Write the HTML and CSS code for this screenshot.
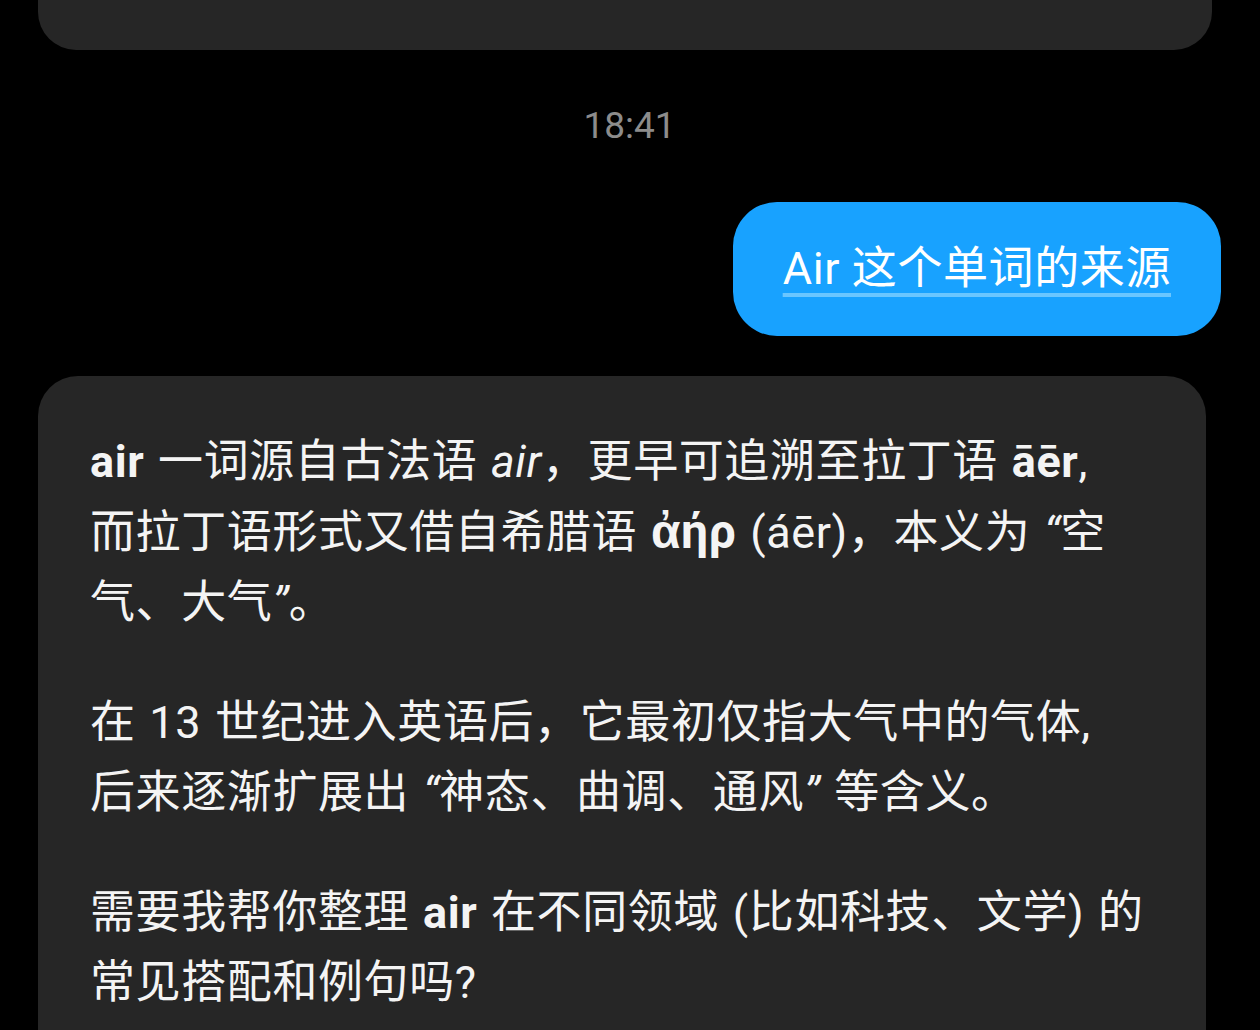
FILE: index.html
```html
<!DOCTYPE html>
<html lang="zh-CN">
<head>
    <meta charset="UTF-8">
    <meta name="viewport" content="width=device-width, initial-scale=1.0">
    <title>Chat</title>
    <link rel="stylesheet" href="styles.css">
</head>
<body>
    <div class="chat">
        <div class="bubble bubble-prev"></div>

        <div class="time">18:41</div>

        <div class="bubble bubble-me">
            <span class="link">Air 这个单词的来源</span>
        </div>

        <div class="bubble bubble-bot">
            <p><b>air</b> 一词源自古法语 <i>air</i>，更早可追溯至拉丁语 <b>āēr</b>,<br>而拉丁语形式又借自希腊语 <b class="greek">ἀήρ</b> (áēr)，本义为 <span class="q">“</span>空<br>气、大气<span class="q">”</span>。</p>
            <p>在 13 世纪进入英语后，它最初仅指大气中的气体,<br>后来逐渐扩展出 <span class="q">“</span>神态、曲调、通风<span class="q">”</span> 等含义。</p>
            <p>需要我帮你整理 <b>air</b> 在不同领域 (比如科技、文学) 的<br>常见搭配和例句吗?</p>
        </div>
    </div>
</body>
</html>
```

FILE: styles.css
```css
body {
    margin: 0;
    padding: 0;
    background: #000;
    color: #f4f4f4;
    font-family: "Roboto", "Noto Sans CJK SC", sans-serif;
    overflow: hidden;
}
.chat {
    display: flex;
    flex-direction: column;
    padding: 0 39px 0 38px;
}
.bubble {
    background: #262626;
    border-radius: 40px;
}
.bubble-prev {
    height: 50px;
    margin-right: 9px;
    border-radius: 0 0 38px 38px;
}
.time {
    margin-top: 54px;
    font-size: 37px;
    line-height: 44px;
    color: #8c8c8c;
    text-align: center;
}
.bubble-me {
    align-self: flex-end;
    margin-top: 54px;
    padding: 37px 50px 37px 50px;
    background: #18a2ff;
    border-radius: 44px;
    font-size: 45px;
    line-height: 60px;
    letter-spacing: 0.6px;
    color: #fff;
}
.link {
    text-decoration: underline;
    text-decoration-color: #6ac6ff;
    text-decoration-thickness: 4px;
    text-underline-offset: 9px;
}
.bubble-bot {
    margin-top: 40px;
    margin-right: 15px;
    padding: 51px 40px 40px 52px;
    font-size: 45px;
    line-height: 70px;
    letter-spacing: 0.6px;
    word-spacing: 2px;
}
.bubble-bot p {
    margin: 0 0 50px;
}
.bubble-bot b {
    font-weight: 700;
}
.greek {
    font-size: 48px;
}
.q {
    font-family: "Roboto", sans-serif;
    font-style: italic;
}
```
